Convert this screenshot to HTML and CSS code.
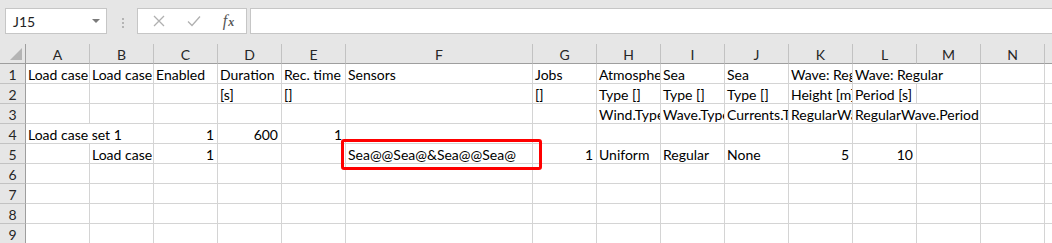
FILE: index.html
```html
<!DOCTYPE html>
<html>

<head>
  <title>Load cases</title>
  <link rel="stylesheet" href="styles.css">
</head>

<body>
  <div class='toolbar'>
    <div class='namebox'>
      <span>J15</span>
      <svg class='caret' width='8' height='4' viewBox='0 0 8 4'><path d='M0 0 H8 L4 4 Z' /></svg>
    </div>
    <div class='grip'><i></i><i></i><i></i></div>
    <div class='fxbox'>
      <span class='slot'>
        <svg width='12' height='12' viewBox='0 0 12 12'><path d='M1 1 L11 11 M11 1 L1 11' /></svg>
      </span>
      <span class='slot'>
        <svg width='14' height='12' viewBox='0 0 14 12'><path d='M1 6.5 L5 10.5 L13 1.5' /></svg>
      </span>
      <span class='slot fx'>f<span class='sub'>x</span></span>
    </div>
    <div class='formula'></div>
  </div>

  <div class='sheet'>
    <table class='grid'>
      <colgroup>
        <col class='rhcol'>
        <col><col><col><col><col>
        <col class='wide'>
        <col><col><col><col><col><col><col><col>
      </colgroup>
      <tr class='hd'>
        <th class='corner'><span class='tri'></span></th>
        <th>A</th><th>B</th><th>C</th><th>D</th><th>E</th><th>F</th><th>G</th>
        <th>H</th><th>I</th><th>J</th><th>K</th><th>L</th><th>M</th><th>N</th><th>O</th>
      </tr>
      <tr>
        <td class='rh'>1</td>
        <td>Load case</td><td>Load case</td><td>Enabled</td><td>Duration</td><td>Rec. time</td>
        <td>Sensors</td><td>Jobs</td><td>Atmosphere</td><td>Sea</td><td>Sea</td>
        <td>Wave: Regular</td><td colspan='2'>Wave: Regular</td><td></td><td></td>
      </tr>
      <tr>
        <td class='rh'>2</td>
        <td></td><td></td><td></td><td>[s]</td><td>[]</td>
        <td></td><td>[]</td><td>Type []</td><td>Type []</td><td>Type []</td>
        <td>Height [m]</td><td>Period [s]</td><td></td><td></td><td></td>
      </tr>
      <tr>
        <td class='rh'>3</td>
        <td></td><td></td><td></td><td></td><td></td>
        <td></td><td></td><td>Wind.Type</td><td>Wave.Type</td><td>Currents.Type</td>
        <td>RegularWave.Height</td><td colspan='2'>RegularWave.Period</td><td></td><td></td>
      </tr>
      <tr>
        <td class='rh'>4</td>
        <td colspan='2'>Load case set 1</td><td class='num'>1</td><td class='num'>600</td><td class='num'>1</td>
        <td></td><td></td><td></td><td></td><td></td>
        <td></td><td></td><td></td><td></td><td></td>
      </tr>
      <tr>
        <td class='rh'>5</td>
        <td></td><td>Load case</td><td class='num'>1</td><td></td><td></td>
        <td>Sea@@Sea@&amp;Sea@@Sea@</td><td class='num'>1</td><td>Uniform</td><td>Regular</td><td>None</td>
        <td class='num'>5</td><td class='num'>10</td><td></td><td></td><td></td>
      </tr>
      <tr>
        <td class='rh'>6</td>
        <td></td><td></td><td></td><td></td><td></td><td></td><td></td><td></td>
        <td></td><td></td><td></td><td></td><td></td><td></td><td></td>
      </tr>
      <tr>
        <td class='rh'>7</td>
        <td></td><td></td><td></td><td></td><td></td><td></td><td></td><td></td>
        <td></td><td></td><td></td><td></td><td></td><td></td><td></td>
      </tr>
      <tr>
        <td class='rh'>8</td>
        <td></td><td></td><td></td><td></td><td></td><td></td><td></td><td></td>
        <td></td><td></td><td></td><td></td><td></td><td></td><td></td>
      </tr>
      <tr>
        <td class='rh'>9</td>
        <td></td><td></td><td></td><td></td><td></td><td></td><td></td><td></td>
        <td></td><td></td><td></td><td></td><td></td><td></td><td></td>
      </tr>
    </table>

    <!-- red marker around F5 -->
    <div class='highlight'></div>
  </div>
</body>

</html>
```

FILE: styles.css
```css
body {
  margin: 0;
  background: #e6e6e6;
  font: 14px Lato, "Liberation Sans", sans-serif;
  color: #000000;
  overflow: hidden;
}

.toolbar {
  display: flex;
  align-items: flex-start;
  height: 44px;
  padding: 8px 0 0 5px;
  box-sizing: border-box;
}

.namebox {
  display: flex;
  align-items: center;
  justify-content: space-between;
  width: 102px;
  height: 26px;
  box-sizing: border-box;
  padding: 0 6px 0 7px;
  border: 1px solid #c6c6c6;
  background: #ffffff;
  font-size: 14px;
  color: #222222;
}

.caret {
  fill: #7a7a7a;
}

.grip {
  display: flex;
  flex-direction: column;
  gap: 2px;
  margin: 10px 0 0 15px;
}

.grip i {
  display: block;
  width: 2px;
  height: 2px;
  background: #b4b4b4;
}

.fxbox {
  display: flex;
  align-items: center;
  width: 110px;
  height: 26px;
  box-sizing: border-box;
  margin-left: 13px;
  padding-left: 3px;
  border: 1px solid #c6c6c6;
  background: #ffffff;
}

.slot {
  display: flex;
  justify-content: center;
  align-items: baseline;
  width: 35px;
}

.slot svg {
  fill: none;
  stroke: #b0b0b0;
  stroke-width: 1.3;
}

.fx {
  font: italic 16px "Liberation Serif", serif;
  color: #555555;
}

.fx .sub {
  font-size: 12px;
  font-weight: bold;
  margin-left: 1px;
}

.formula {
  flex: 1;
  height: 26px;
  box-sizing: border-box;
  margin-left: 3px;
  border: 1px solid #c6c6c6;
  border-right: none;
  background: #ffffff;
}

.sheet {
  position: relative;
}

.grid {
  table-layout: fixed;
  border-collapse: separate;
  border-spacing: 0;
  width: 1109px;
  background: #ffffff;
}

.grid col {
  width: 64px;
}

.grid col.rhcol {
  width: 26px;
}

.grid col.wide {
  width: 187px;
}

.grid th,
.grid td {
  height: 19px;
  padding: 0 2px;
  border-right: 1px solid #d4d4d4;
  border-bottom: 1px solid #d4d4d4;
  white-space: nowrap;
  overflow: hidden;
  vertical-align: bottom;
  text-align: left;
  line-height: 17px;
}

.grid .hd th {
  background: #e6e6e6;
  border-right-color: #c2c2c2;
  border-bottom-color: #9e9e9e;
  text-align: center;
  font-weight: normal;
  color: #262626;
}

.grid .hd th.corner {
  position: relative;
  border-right-color: #9e9e9e;
}

.tri {
  position: absolute;
  right: 3px;
  bottom: 3px;
  width: 0;
  height: 0;
  border-left: 12px solid transparent;
  border-bottom: 12px solid #b4b4b4;
}

.grid td.rh {
  background: #e6e6e6;
  border-right-color: #9e9e9e;
  border-bottom-color: #c2c2c2;
  text-align: center;
  color: #262626;
  padding: 0;
}

.grid td.num {
  text-align: right;
  padding-right: 3px;
}

.highlight {
  position: absolute;
  left: 341px;
  top: 95px;
  width: 201px;
  height: 31px;
  box-sizing: border-box;
  border: 3px solid #ff0000;
  border-radius: 3px;
}
```
